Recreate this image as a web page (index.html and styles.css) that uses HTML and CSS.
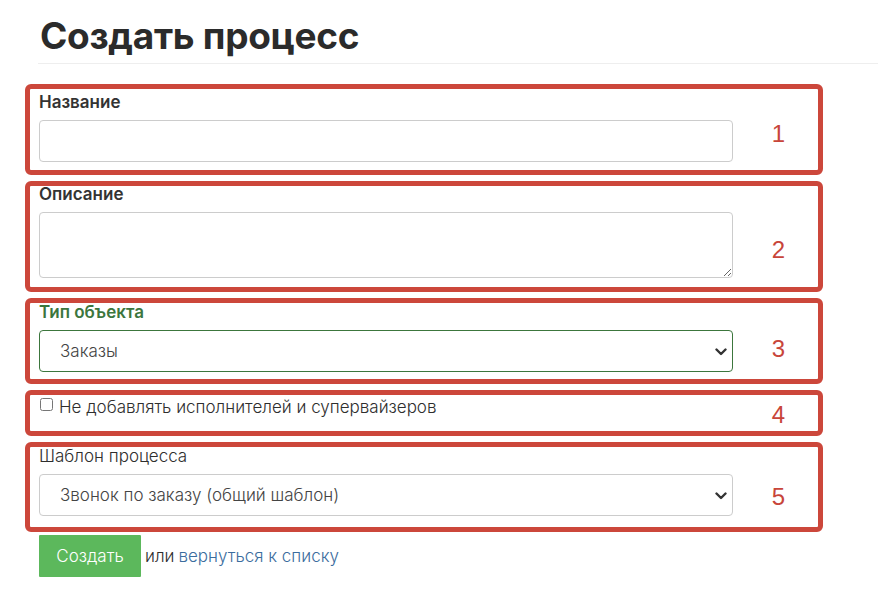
FILE: index.html
```html
<!DOCTYPE html>
<html lang="ru">
<head>
<meta charset="utf-8">
<title>Создать процесс</title>
<link rel="stylesheet" href="styles.css">
</head>
<body>
<h1 class="title">Создать процесс</h1>
<form class="form">
  <div class="mark mark-1">
    <div class="field">
      <label class="lbl" for="name">Название</label>
      <input class="ctrl" id="name" type="text">
    </div>
    <div class="num num-1">1</div>
  </div>
  <div class="mark mark-2">
    <div class="field">
      <label class="lbl" for="desc">Описание</label>
      <textarea class="ctrl area" id="desc"></textarea>
    </div>
    <div class="num num-2">2</div>
  </div>
  <div class="mark mark-3">
    <div class="field">
      <label class="lbl lbl-ok" for="type">Тип объекта</label>
      <div class="sel-wrap">
        <select class="ctrl sel sel-ok" id="type"><option>Заказы</option></select>
        <svg class="chev" width="12" height="8" viewBox="0 0 12 8"><path d="M1.5 1.5 L6 6 L10.5 1.5" fill="none" stroke="#333" stroke-width="2.4" stroke-linecap="round" stroke-linejoin="round"/></svg>
      </div>
    </div>
    <div class="num num-3">3</div>
  </div>
  <div class="mark mark-4">
    <div class="field">
      <label class="chk"><input type="checkbox" class="box"><span class="chk-text">Не добавлять исполнителей и супервайзеров</span></label>
    </div>
    <div class="num num-4">4</div>
  </div>
  <div class="mark mark-5">
    <div class="field">
      <label class="lbl lbl-plain" for="tpl">Шаблон процесса</label>
      <div class="sel-wrap">
        <select class="ctrl sel" id="tpl"><option>Звонок по заказу (общий шаблон)</option></select>
        <svg class="chev" width="12" height="8" viewBox="0 0 12 8"><path d="M1.5 1.5 L6 6 L10.5 1.5" fill="none" stroke="#333" stroke-width="2.4" stroke-linecap="round" stroke-linejoin="round"/></svg>
      </div>
    </div>
    <div class="num num-5">5</div>
  </div>
  <div class="actions">
    <button type="button" class="btn">Создать</button> <span class="or">или</span> <a class="back" href="#">вернуться к списку</a>
  </div>
</form>
</body>
</html>
```
FILE: styles.css
```css
* { box-sizing: border-box; }
body {
  margin: 0;
  background: #fff;
  color: #333;
  font-family: Inter, "Noto Sans", sans-serif;
  font-size: 17px;
  font-weight: 300;
}
.title {
  margin: 15px 0 20px 38px;
  padding: 0 0 6px 2px;
  font-size: 37px;
  line-height: 42px;
  height: 49px;
  font-weight: 700;
  color: #2b2b2b;
  border-bottom: 1px solid #eee;
  letter-spacing: -0.3px;
}
.form {
  display: flex;
  flex-direction: column;
  gap: 6px;
  padding-left: 25px;
}
.mark {
  width: 798px;
  border: 5px solid #cc473b;
  border-radius: 6px;
  display: flex;
  padding-left: 9px;
}
.mark-1 { height: 91px; padding-top: 5px; }
.mark-2 { height: 111px; padding-top: 0; }
.mark-3 { height: 86px; padding-top: 1px; }
.mark-4 { height: 46px; padding-top: 4px; }
.mark-5 { height: 90px; padding-top: 1px; }
.field {
  flex: 0 0 694px;
  display: flex;
  flex-direction: column;
}
.lbl {
  display: block;
  font-weight: 600;
  font-size: 17px;
  line-height: 16px;
  margin-bottom: 10px;
  color: #333;
}
.lbl-ok { color: #3c763d; }
.lbl-plain { font-weight: 300; color: #2e2e2e; }
.ctrl {
  display: block;
  width: 694px;
  height: 42px;
  border: 1px solid #ccc;
  border-radius: 4px;
  background: #fff;
  font-family: Inter, "Noto Sans", sans-serif;
  font-size: 17px;
  font-weight: 300;
  color: #444;
  padding: 0 20px;
  margin: 0;
}
.area { height: 66px; resize: vertical; padding: 6px 12px; }
.sel-wrap { position: relative; width: 694px; }
.sel {
  appearance: none;
  -webkit-appearance: none;
}
.sel-ok { border-color: #3c763d; }
.chev {
  position: absolute;
  right: 6px;
  top: 18px;
  pointer-events: none;
}
.num {
  flex: 0 0 85px;
  padding-left: 6px;
  align-self: center;
  text-align: center;
  font-family: "Liberation Sans", Arial, sans-serif;
  font-size: 24px;
  line-height: 24px;
  color: #c8453a;
}
.num-1 { margin-top: 4px; }
.num-2 { margin-top: 27px; }
.num-3 { margin-top: 15px; }
.num-5 { margin-top: 18px; }
.chk {
  display: flex;
  align-items: flex-start;
  height: 16px;
  font-size: 17px;
  line-height: 16px;
  font-weight: 300;
  color: #2e2e2e;
}
.chk-text { display: block; line-height: 16px; }
.box {
  width: 13px;
  height: 13px;
  margin: -1px 6px 0 1px;
  flex: 0 0 13px;
}
.actions {
  display: flex;
  align-items: center;
  margin-top: -3px;
  padding-left: 14px;
  gap: 4px;
  font-size: 17px;
}
.btn {
  width: 102px;
  height: 42px;
  background: #5cb85c;
  border: none;
  border-radius: 1px;
  color: #fff;
  font-family: Inter, "Noto Sans", sans-serif;
  font-size: 17px;
  font-weight: 300;
  padding: 0;
}
.or { color: #2e2e2e; }
.back { color: #3b6d9e; text-decoration: none; }
```
